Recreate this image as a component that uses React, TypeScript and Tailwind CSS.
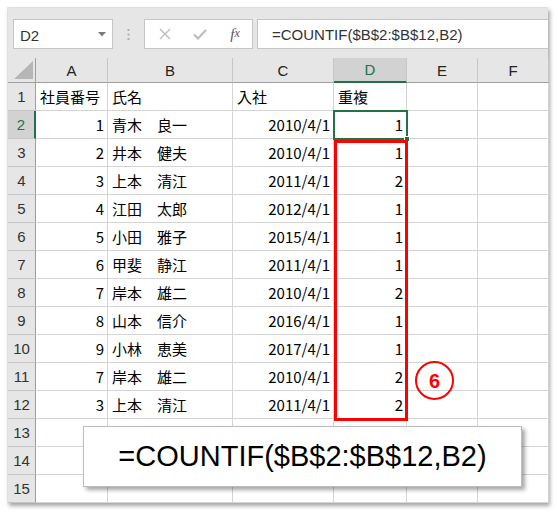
import React from "react";

type Row = { no: string; name: string; date: string; dup: string };

const COLS = ["A", "B", "C", "D", "E", "F"];

const ROWS: Row[] = [
  { no: "1", name: "青木　良一", date: "2010/4/1", dup: "1" },
  { no: "2", name: "井本　健夫", date: "2010/4/1", dup: "1" },
  { no: "3", name: "上本　清江", date: "2011/4/1", dup: "2" },
  { no: "4", name: "江田　太郎", date: "2012/4/1", dup: "1" },
  { no: "5", name: "小田　雅子", date: "2015/4/1", dup: "1" },
  { no: "6", name: "甲斐　静江", date: "2011/4/1", dup: "1" },
  { no: "7", name: "岸本　雄二", date: "2010/4/1", dup: "2" },
  { no: "8", name: "山本　信介", date: "2016/4/1", dup: "1" },
  { no: "9", name: "小林　恵美", date: "2017/4/1", dup: "1" },
  { no: "7", name: "岸本　雄二", date: "2010/4/1", dup: "2" },
  { no: "3", name: "上本　清江", date: "2011/4/1", dup: "2" },
];

const FORMULA = "=COUNTIF($B$2:$B$12,B2)";

const cellFont = { fontFamily: '"Noto Sans CJK JP", "Noto Sans", sans-serif' };

function Cell({ children, align = "left" }: { children?: React.ReactNode; align?: "left" | "right" }) {
  return (
    <div
      className={
        "border-r border-b border-[#d4d4d4] flex items-center text-[15px] leading-none text-black whitespace-nowrap overflow-hidden " +
        (align === "right" ? "justify-end pr-[3px]" : "justify-start pl-[4px]")
      }
      style={cellFont}
    >
      {children}
    </div>
  );
}

function RowHead({ n }: { n: number }) {
  const sel = n === 2;
  return (
    <div
      className={
        "border-b border-[#c6c6c6] flex items-center justify-center text-[15px] leading-none " +
        (sel
          ? "bg-[#d2d2d2] text-[#217346] border-r-2 border-r-[#217346]"
          : "bg-[#e6e6e6] text-[#333] border-r border-r-[#9f9f9f]")
      }
      style={{ fontFamily: '"Liberation Sans", sans-serif' }}
    >
      {n}
    </div>
  );
}

export default function App() {
  return (
    <div className="w-[558px] h-[513px] bg-white pt-[7px] pl-[7px] overflow-hidden">
      <div className="w-[541px] h-[496px] bg-white shadow-[2px_3px_4px_rgba(0,0,0,0.35)] border-l border-t border-[#e0e0e0] flex flex-col">
        {/* toolbar */}
        <div
          className="h-[51px] bg-[#e6e6e6] flex items-start pt-[11px] pl-[5px]"
          style={{ fontFamily: '"Liberation Sans", sans-serif' }}
        >
          <div className="w-[100px] h-[30px] bg-white border border-[#c6c6c6] flex items-center pl-[6px] pr-[6px] pt-[3px]">
            <span className="text-[15px] text-[#333] leading-none flex-1">D2</span>
            <svg width="8" height="5" viewBox="0 0 8 5" className="mb-[3px]">
              <path d="M0 0 L8 0 L4 4.5 Z" fill="#7a7a7a" />
            </svg>
          </div>
          <div className="w-[31px] h-[30px] flex items-center justify-center">
            <svg width="3" height="11" viewBox="0 0 3 11">
              <rect x="0.5" y="0" width="2" height="2" fill="#b0b0b0" />
              <rect x="0.5" y="4.5" width="2" height="2" fill="#b0b0b0" />
              <rect x="0.5" y="9" width="2" height="2" fill="#b0b0b0" />
            </svg>
          </div>
          <div className="w-[109px] h-[30px] bg-white border border-[#c6c6c6] flex items-center">
            <div className="w-[37px] flex justify-center pl-[2px]">
              <svg width="12" height="12" viewBox="0 0 12 12">
                <path d="M1 1 L11 11 M11 1 L1 11" stroke="#bdbdbd" strokeWidth="1.4" />
              </svg>
            </div>
            <div className="w-[36px] flex justify-center">
              <svg width="14" height="12" viewBox="0 0 14 12">
                <path d="M1 6.5 L5 10.5 L13 2" stroke="#bdbdbd" strokeWidth="2.2" fill="none" />
              </svg>
            </div>
            <div
              className="w-[34px] flex justify-center text-[15px] italic text-[#555] leading-none"
              style={{ fontFamily: '"Liberation Serif", serif' }}
            >
              f<span className="text-[12px]">x</span>
            </div>
          </div>
          <div className="w-[4px]" />
          <div className="flex-1 h-[30px] bg-white border-t border-b border-l border-[#c6c6c6] flex items-center pl-[14px]">
            <span className="text-[15px] text-[#333] leading-none">{FORMULA}</span>
          </div>
        </div>

        {/* sheet */}
        <div className="relative">
          <div className="grid grid-cols-[28px_72px_125px_101px_73px_71px_71px] grid-rows-[25px_repeat(15,28px)]">
            {/* corner */}
            <div className="bg-[#e6e6e6] border-r border-b border-[#9f9f9f] flex items-end justify-end pr-[2px] pb-[3px]">
              <svg width="19" height="18" viewBox="0 0 19 18">
                <path d="M19 0 L19 18 L0 18 Z" fill="#b6b6b6" />
              </svg>
            </div>
            {COLS.map((c) => {
              const sel = c === "D";
              return (
                <div
                  key={c}
                  className={
                    "border-r border-[#c6c6c6] flex items-center justify-center text-[15px] leading-none " +
                    (sel
                      ? "bg-[#d2d2d2] text-[#217346] border-b-2 border-b-[#217346]"
                      : "bg-[#e6e6e6] text-[#222] border-b border-b-[#9f9f9f]")
                  }
                  style={{ fontFamily: '"Liberation Sans", sans-serif' }}
                >
                  {c}
                </div>
              );
            })}

            <RowHead n={1} />
            <Cell>社員番号</Cell>
            <Cell>氏名</Cell>
            <Cell>入社</Cell>
            <Cell>重複</Cell>
            <Cell />
            <Cell />

            {ROWS.map((r, i) => (
              <React.Fragment key={i}>
                <RowHead n={i + 2} />
                <Cell align="right">{r.no}</Cell>
                <Cell>{r.name}</Cell>
                <Cell align="right">{r.date}</Cell>
                <Cell align="right">{r.dup}</Cell>
                <Cell />
                <Cell />
              </React.Fragment>
            ))}

            {[13, 14, 15].map((n) => (
              <React.Fragment key={n}>
                <RowHead n={n} />
                <Cell />
                <Cell />
                <Cell />
                <Cell />
                <Cell />
                <Cell />
              </React.Fragment>
            ))}
          </div>

          {/* active cell D2 */}
          <div className="absolute left-[325px] top-[52px] w-[75px] h-[30px] border-2 border-[#217346]" />
          <div className="absolute left-[396px] top-[78px] w-[6px] h-[6px] bg-[#217346] border border-white" />

          {/* red highlight */}
          <div className="absolute left-[326px] top-[82px] w-[74px] h-[281px] border-[3px] border-[#ff0000]" />

          {/* circled number */}
          <div
            className="absolute left-[407px] top-[303px] w-[39px] h-[39px] rounded-full border-[2.5px] border-[#ff0000] flex items-center justify-center text-[20px] font-bold text-[#ff0000] leading-none"
            style={{ fontFamily: '"Liberation Sans", sans-serif' }}
          >
            6
          </div>

          {/* formula callout */}
          <div
            className="absolute left-[75px] top-[368px] w-[439px] h-[61px] bg-white border border-[#bdbdbd] shadow-[3px_3px_4px_rgba(0,0,0,0.35)] flex items-center justify-center text-[29px] text-black leading-none"
            style={{ fontFamily: '"Liberation Sans", sans-serif' }}
          >
            {FORMULA}
          </div>
        </div>
      </div>
    </div>
  );
}
